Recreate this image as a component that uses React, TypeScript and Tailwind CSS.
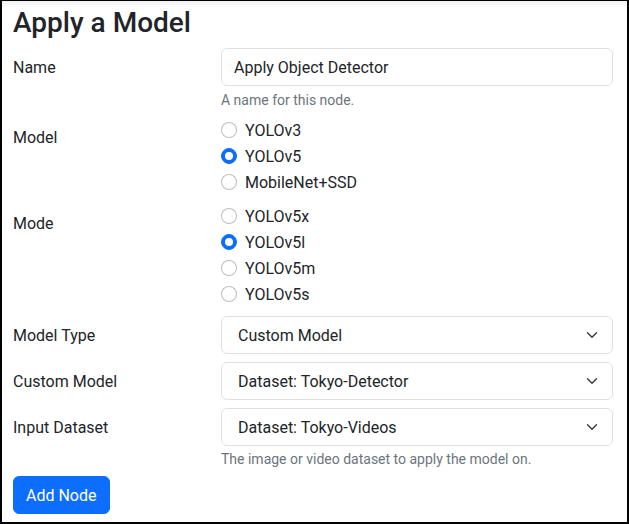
import React from "react";

function Radio({ label, checked }: { label: string; checked?: boolean }) {
  return (
    <div className="flex items-start h-6 mb-[2px]">
      <span
        className={
          "mt-1 w-4 h-4 rounded-full shrink-0 flex items-center justify-center " +
          (checked ? "bg-[#0d6efd] border border-[#0d6efd]" : "bg-white border border-[rgba(0,0,0,0.25)]")
        }
      >
        {checked && <span className="w-2 h-2 rounded-full bg-white" />}
      </span>
      <span className="ml-2 leading-6 relative top-px">{label}</span>
    </div>
  );
}

function Select({ value }: { value: string }) {
  return (
    <div className="relative h-[38px] w-full border border-[#dee2e6] rounded-[6px] bg-white flex items-center pl-4 pr-9">
      <span className="leading-6 relative top-px">{value}</span>
      <svg
        className="absolute right-3 top-1/2 -translate-y-1/2"
        width="16"
        height="12"
        viewBox="0 0 16 16"
        fill="none"
      >
        <path d="m2 5 6 6 6-6" stroke="#343a40" strokeWidth="1.8" strokeLinecap="round" strokeLinejoin="round" />
      </svg>
    </div>
  );
}

function Label({ children }: { children: React.ReactNode }) {
  return <div className="pt-[8px] pb-[6px] leading-6">{children}</div>;
}

export default function App() {
  return (
    <div
      className="w-[629px] h-[524px] bg-white border-l-2 border-r-2 border-b-2 border-t border-black text-[#212529] text-base overflow-hidden relative"
      style={{ fontFamily: "Roboto, 'Liberation Sans', sans-serif" }}
    >
      <div className="absolute inset-x-0 top-0 h-[8px] bg-gradient-to-b from-[#f2f2f2] to-white pointer-events-none" />
      <div className="relative pl-[11px] pr-[14px] pt-[5px]">
        <h3 className="text-[28px] font-medium leading-[1.2] mb-2">Apply a Model</h3>

        <div className="grid grid-cols-[208px_1fr] mb-[7px]">
          <Label>Name</Label>
          <div>
            <div className="h-[38px] border border-[#dee2e6] rounded-[6px] flex items-center px-3 leading-6">
              <span className="relative top-px">Apply Object Detector</span>
            </div>
            <div className="mt-1 text-sm leading-[21px] text-[#6c757d]">A name for this node.</div>
          </div>
        </div>

        <div className="grid grid-cols-[208px_1fr] mb-2">
          <Label>Model</Label>
          <div>
            <Radio label="YOLOv3" />
            <Radio label="YOLOv5" checked />
            <Radio label="MobileNet+SSD" />
          </div>
        </div>

        <div className="grid grid-cols-[208px_1fr] mb-2">
          <Label>Mode</Label>
          <div>
            <Radio label="YOLOv5x" />
            <Radio label="YOLOv5l" checked />
            <Radio label="YOLOv5m" />
            <Radio label="YOLOv5s" />
          </div>
        </div>

        <div className="grid grid-cols-[208px_1fr] mb-2">
          <Label>Model Type</Label>
          <Select value="Custom Model" />
        </div>

        <div className="grid grid-cols-[208px_1fr] mb-2">
          <Label>Custom Model</Label>
          <Select value="Dataset: Tokyo-Detector" />
        </div>

        <div className="grid grid-cols-[208px_1fr] mb-[6px]">
          <Label>Input Dataset</Label>
          <div>
            <Select value="Dataset: Tokyo-Videos" />
            <div className="mt-[3px] text-sm leading-[21px] text-[#6c757d]">
              The image or video dataset to apply the model on.
            </div>
          </div>
        </div>

        <button className="h-[38px] px-3 rounded-[6px] bg-[#0d6efd] text-white leading-6 border border-[#0d6efd]">
          <span className="relative top-px">Add Node</span>
        </button>
      </div>
    </div>
  );
}
